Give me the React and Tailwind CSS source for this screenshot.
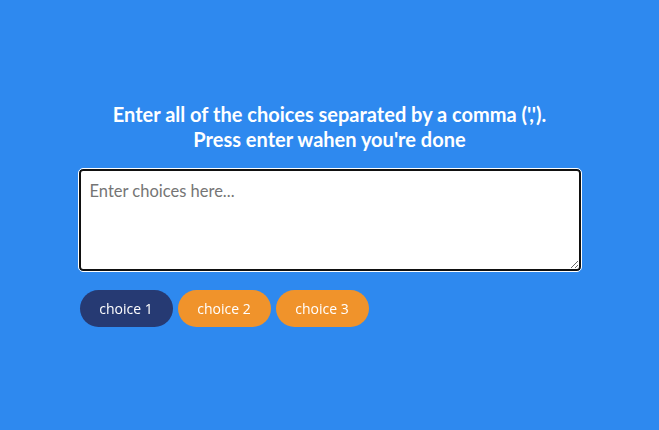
import { useState } from 'react';

function App() {
  const [text, setText] = useState('');
  const choices = ['choice 1', 'choice 2', 'choice 3'];

  return (
    <div className="min-h-screen w-full bg-[#2e89ef] flex justify-center" style={{ fontFamily: 'Lato, "Open Sans", sans-serif' }}>
      <div className="w-[502px] pt-[102px]">
        <h2 className="text-center text-white font-bold text-[20px] leading-[25px]">
          Enter all of the choices separated by a comma (',').
          <br />
          Press enter wahen you're done
        </h2>

        <textarea
          value={text}
          onChange={(e) => setText(e.target.value)}
          autoFocus
          placeholder="Enter choices here..."
          className="mt-[17px] block w-full h-[102px] rounded-[4px] border-2 border-[#111] bg-white px-[9px] py-[8px] text-[16.5px] text-gray-800 placeholder:text-[#757575] outline outline-1 outline-white"
          style={{ fontFamily: 'Lato, sans-serif' }}
        />

        <div className="mt-[19px] ml-px flex gap-[5px]">
          {choices.map((c, i) => (
            <button
              key={c}
              className={`w-[93px] h-[37px] rounded-full text-white text-[14px] ${i === 0 ? 'bg-[#263a73]' : 'bg-[#f0932b]'}`}
              style={{ fontFamily: '"Open Sans", sans-serif' }}
            >
              {c}
            </button>
          ))}
        </div>
      </div>
    </div>
  );
}

export default App;
